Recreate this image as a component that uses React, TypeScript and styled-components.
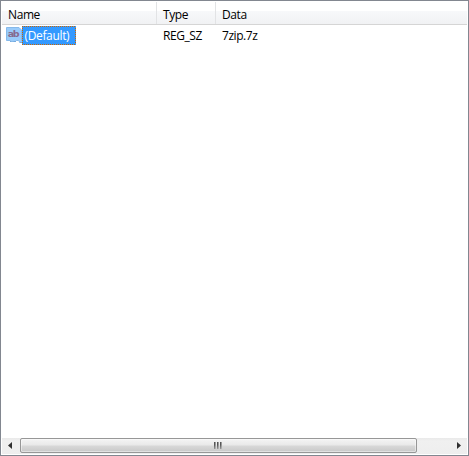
import styled, { createGlobalStyle } from "styled-components";

type RegistryValue = {
  name: string;
  type: string;
  data: string;
  selected?: boolean;
};

const values: RegistryValue[] = [
  { name: "(Default)", type: "REG_SZ", data: "7zip.7z", selected: true },
];

const StringIcon: React.FC = () => (
  <svg width='17' height='17' viewBox='0 0 17 17'>
    <path
      d='M0.5 0.5H13L15.5 3V14.5L14 15.5L12.5 13.5H10.5L9.5 14.5H5.5L4.5 13.5H0.5Z'
      fill='#99cbfa'
      stroke='#86b9ea'
    />
    <path d='M4 14.5H5.5M7.5 14.5H10M13.5 15.5H16' stroke='#74aade' fill='none' />
    <text
      x='1.8'
      y='10'
      fill='#86698f'
      fontFamily='"DejaVu Sans", sans-serif'
      fontSize='9.5'
      fontWeight='700'
      textLength='11.8'
    >
      ab
    </text>
  </svg>
);

const App: React.FC = () => {
  return (
    <>
      <GlobalStyle />
      <ListView>
        <Header>
          <HeaderCell>Name</HeaderCell>
          <HeaderCell>Type</HeaderCell>
          <HeaderCell>Data</HeaderCell>
        </Header>
        <Body>
          {values.map((item) => (
            <Row key={item.name}>
              <NameCell>
                <StringIcon />
                <Label $selected={item.selected}>{item.name}</Label>
              </NameCell>
              <Cell>{item.type}</Cell>
              <Cell>{item.data}</Cell>
            </Row>
          ))}
        </Body>
        <ScrollBar>
          <ArrowButton>
            <svg width='4' height='7' viewBox='0 0 4 7'>
              <path d='M4 0V7L0 3.5Z' fill='#303030' />
            </svg>
          </ArrowButton>
          <Track>
            <Thumb>
              <Grip />
              <Grip />
              <Grip />
            </Thumb>
          </Track>
          <ArrowButton $end>
            <svg width='4' height='7' viewBox='0 0 4 7'>
              <path d='M0 0V7L4 3.5Z' fill='#303030' />
            </svg>
          </ArrowButton>
        </ScrollBar>
      </ListView>
    </>
  );
};

const GlobalStyle = createGlobalStyle`
  * {
    box-sizing: border-box;
  }
  body {
    margin: 0;
    overflow: hidden;
    background: white;
  }
`;

const ListView = styled.div`
  display: flex;
  flex-direction: column;
  width: 469px;
  height: 456px;
  padding: 1px;
  border: 1px solid #828790;
  background: white;
  color: black;
  font-family: "Open Sans", "Noto Sans", sans-serif;
  font-size: 12px;
  line-height: 16px;
`;

const Header = styled.div`
  display: grid;
  grid-template-columns: 155px 59px 1fr;
  flex: none;
  height: 23px;
  width: 465px;
  border-bottom: 1px solid #d5d5d5;
  background: linear-gradient(#fff 0 9px, #f7f8fa 9px, #f1f2f4);
`;

const HeaderCell = styled.div`
  padding: 5px 0 0 6px;
  border-right: 1px solid #e2e3e5;
  letter-spacing: -0.4px;
  &:last-child {
    border-right: none;
  }
`;

const Body = styled.div`
  flex: 1;
  padding-top: 1px;
`;

const Row = styled.div`
  display: grid;
  grid-template-columns: 155px 59px 1fr;
  height: 19px;
`;

const NameCell = styled.div`
  display: flex;
  align-items: flex-start;
  padding-left: 4px;
  svg {
    flex: none;
    margin-top: 1px;
    margin-right: -1px;
  }
`;

const dotsX = "linear-gradient(90deg, #cc6600 50%, #3399ff 50%)";
const dotsY = "linear-gradient(#cc6600 50%, #3399ff 50%)";

const Label = styled.span<{ $selected?: boolean }>`
  width: 54px;
  height: 19px;
  padding: 2px 0 0 2.5px;
  background: ${({ $selected }) =>
    $selected
      ? `${dotsX} 0 0 / 2px 1px repeat-x,
    ${dotsX} 0 100% / 2px 1px repeat-x,
    ${dotsY} 0 0 / 1px 2px repeat-y,
    ${dotsY} 100% 0 / 1px 2px repeat-y,
    #3399ff`
      : "transparent"};
  color: ${({ $selected }) => ($selected ? "white" : "black")};
  letter-spacing: -0.35px;
  white-space: nowrap;
`;

const Cell = styled.div`
  padding: 2px 0 0 6px;
  letter-spacing: -0.45px;
  white-space: nowrap;
`;

const ScrollBar = styled.div`
  display: flex;
  flex: none;
  width: 465px;
  height: 16px;
  background: linear-gradient(#e9e9e9, #f0f0f0 3px, #eee);
`;

const ArrowButton = styled.div<{ $end?: boolean }>`
  display: flex;
  align-items: center;
  justify-content: center;
  width: 17px;
  padding: ${({ $end }) => ($end ? "0 0 1px 1px" : "0 1px 1px 0")};
`;

const Track = styled.div`
  flex: 1;
  padding-left: 1px;
`;

const Thumb = styled.div`
  display: flex;
  justify-content: center;
  gap: 1px;
  width: 397px;
  height: 15px;
  padding: 3px 2px 0 0;
  border: 1px solid #979797;
  border-radius: 2px;
  background: linear-gradient(#f4f4f4, #e9e9e9 6px, #d8d8d8 7px, #c8c8c8);
  box-shadow: inset 0 0 0 1px rgba(255, 255, 255, 0.45);
`;

const Grip = styled.i`
  width: 2px;
  height: 7px;
  background: linear-gradient(rgba(200, 200, 200, 0) 40%, rgba(200, 200, 200, 0.6)),
    linear-gradient(90deg, #555 50%, #999 50%);
`;

export default App;
